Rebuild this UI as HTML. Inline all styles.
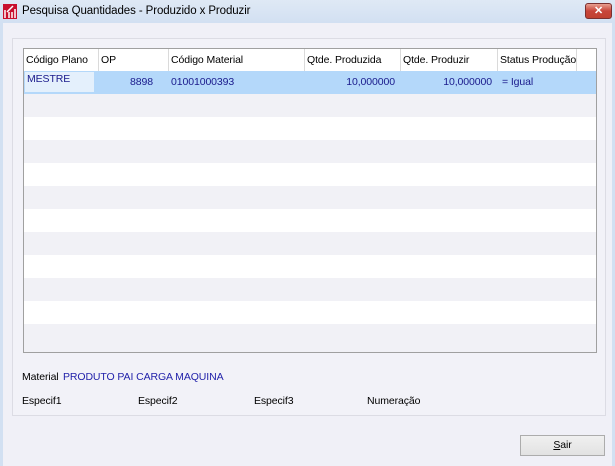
<!DOCTYPE html>
<html><head><style>
*{margin:0;padding:0;box-sizing:border-box}
body{width:615px;height:466px;overflow:hidden;font-family:"Liberation Sans",sans-serif;font-size:10.5px;letter-spacing:-0.1px;background:#f0f0f7;position:relative}
.title{position:absolute;left:0;top:0;width:615px;height:23px;background:linear-gradient(#dfe9f5,#d2e0f2);}
.title span{position:absolute;left:22px;top:5px;font-size:11.5px;color:#000}
.close{position:absolute;left:585px;top:3px;width:27px;height:16px;border:1px solid #7a3030;border-radius:3px;background:linear-gradient(#e8a090,#c8453a 50%,#c04030);color:#fff;font-weight:bold;text-align:center;font-size:11px;line-height:14px}
.lb{position:absolute;left:0;top:23px;width:3px;height:443px;background:#d2e0f2}
.rb{position:absolute;right:0;top:23px;width:3px;height:443px;background:#d2e0f2}
.panel{position:absolute;left:12px;top:38px;width:594px;height:378px;border:1px solid #dcdce4;background:#f2f2f8}
.grid{position:absolute;left:23px;top:48px;width:574px;height:305px;border:1px solid #a0a0a0;background:#f1f1f6;overflow:hidden}
.hdr{position:absolute;left:0;top:0;height:22px;width:573px;background:#fff}
.hdr div{position:absolute;top:0;height:22px;border-right:1px solid #dadada;padding:5px 2px;white-space:nowrap;overflow:hidden}
.row{position:absolute;left:0;width:572px;height:23px}
.sel{background:#b4d8fa;top:22px;color:#1a1a8c}
.sel div{position:absolute;top:5px;white-space:nowrap}
.lbl{position:absolute;white-space:nowrap}
.btn{position:absolute;left:520px;top:435px;width:85px;height:21px;border:1px solid #acacac;background:linear-gradient(#f0f0f0,#e2e2e2);text-align:center;line-height:19px}
</style></head><body>
<div class="title">
<svg style="position:absolute;left:3px;top:4px" width="14" height="15" viewBox="0 0 14 15"><rect width="14" height="15" fill="#c8102e"/><path d="M2 14V6M4 8L10 2M6 14V8M9 14V8M12 14V5" stroke="#fff" stroke-width="1.5" fill="none"/></svg>
<span>Pesquisa Quantidades - Produzido x Produzir</span>
<div class="close">✕</div></div>
<div class="lb"></div><div class="rb"></div>
<div class="panel"></div>
<div class="grid">
<div class="row" style="top:45px;background:#f1f1f6"></div>
<div class="row" style="top:68px;background:#fff"></div>
<div class="row" style="top:114px;background:#fff"></div>
<div class="row" style="top:160px;background:#fff"></div>
<div class="row" style="top:206px;background:#fff"></div>
<div class="row" style="top:252px;background:#fff"></div>
<div class="hdr">
<div style="left:0;width:75px">Código Plano</div>
<div style="left:75px;width:70px">OP</div>
<div style="left:145px;width:136px">Código Material</div>
<div style="left:281px;width:96px">Qtde. Produzida</div>
<div style="left:377px;width:97px">Qtde. Produzir</div>
<div style="left:474px;width:79px">Status Produção</div>
</div>
<div class="row sel">
<div style="left:1px;top:1px;width:69px;height:20px;background:#e4f0fc;padding:1px 2px">MESTRE</div>
<div style="right:443px">8898</div>
<div style="left:147px">01001000393</div>
<div style="right:201px">10,000000</div>
<div style="right:104px">10,000000</div>
<div style="left:478px">= Igual</div>
</div>
</div>
<div class="lbl" style="left:22px;top:371px">Material</div>
<div class="lbl" style="left:63px;top:371px;color:#2222aa">PRODUTO PAI CARGA MAQUINA</div>
<div class="lbl" style="left:22px;top:395px">Especif1</div>
<div class="lbl" style="left:138px;top:395px">Especif2</div>
<div class="lbl" style="left:254px;top:395px">Especif3</div>
<div class="lbl" style="left:367px;top:395px">Numeração</div>
<div class="btn"><u>S</u>air</div>
</body></html>
